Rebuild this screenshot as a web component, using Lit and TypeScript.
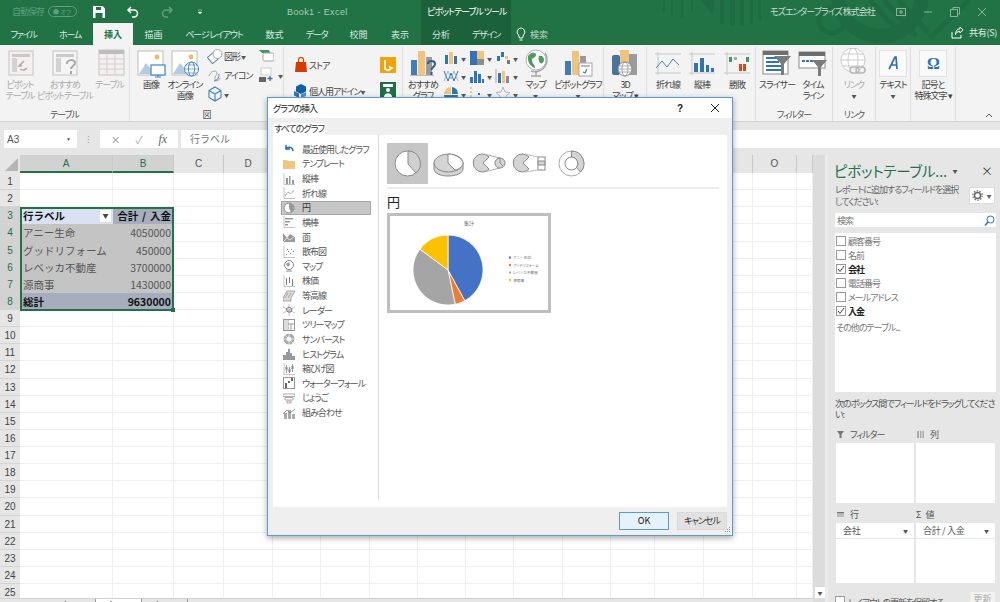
import { LitElement, html, svg, css } from "lit";
import { customElement } from "lit/decorators.js";

const BLUE = "#4472c4";
const ORANGE = "#ed7d31";
const GRAY = "#a5a5a5";
const YELLOW = "#ffc000";

// pivot data, the pie slices are worked out from these
const pivot = [
  { name: "アニー生命", value: 4050000, color: BLUE },
  { name: "グッドリフォーム", value: 450000, color: ORANGE },
  { name: "レベッカ不動産", value: 3700000, color: GRAY },
  { name: "源商事", value: 1430000, color: YELLOW },
];
const total = pivot.reduce((a, p) => a + p.value, 0);

function pieSlices(cx: number, cy: number, r: number) {
  let start = 0;
  return pivot.map((p) => {
    const end = start + (p.value / total) * Math.PI * 2;
    const x1 = cx + r * Math.sin(start);
    const y1 = cy - r * Math.cos(start);
    const x2 = cx + r * Math.sin(end);
    const y2 = cy - r * Math.cos(end);
    const large = end - start > Math.PI ? 1 : 0;
    start = end;
    return { d: `M${cx} ${cy}L${x1} ${y1}A${r} ${r} 0 ${large} 1 ${x2} ${y2}Z`, color: p.color };
  });
}

const ic = (w: number, h: number, body: unknown) =>
  html`<svg width=${w} height=${h} viewBox="0 0 ${w} ${h}" fill="none">${body}</svg>`;

// ribbon icons, 30 x 30 box
const big = (body: unknown) => ic(30, 30, body);

const pictureBase = svg`
  <rect x="2" y="3" width="25" height="24" fill="#fff" stroke="#bdbdbd"/>
  <path d="M3 26L10 15l5 6 3-3 8 8z" fill="#b5cbe3"/>
  <circle cx="21" cy="9" r="2.4" fill="#f0b964"/>`;

const icons: Record<string, unknown> = {
  pivot: big(svg`<rect x="4" y="3" width="24" height="24" fill="#f5eff0" stroke="#c4c4c4"/><rect x="7" y="6" width="18" height="3" fill="#c9c9c9"/><rect x="7" y="10" width="5" height="14" fill="#d2d2d2"/><path d="M19 13l-5 5 3 0M22 20a5 5 0 0 1-7 1" stroke="#aaa" stroke-width="1.5"/>`),
  recpivot: big(svg`<rect x="3" y="3" width="24" height="24" fill="#f5f5f5" stroke="#c4c4c4"/><rect x="6" y="6" width="18" height="3" fill="#c9c9c9"/><rect x="6" y="10" width="5" height="14" fill="#d2d2d2"/><path d="M17 16c0-5 8-5 8-1 0 3-4 3-4 6M21 23v3" stroke="#a9a9a9" stroke-width="2"/>`),
  table: big(svg`<rect x="4" y="2" width="25" height="25" fill="#f6eff0" stroke="#c4c4c4"/><rect x="4" y="2" width="25" height="4" fill="#bdbdbd"/><path d="M12 6v21M20 6v21M4 11h25M4 16h25M4 21h25" stroke="#cfcfcf"/>`),
  picture: big(svg`${pictureBase}<rect x="15" y="17" width="14" height="10" fill="#fff" stroke="#3c86c4" stroke-width="1.2"/><path d="M19 29h6M22 27v2" stroke="#3c86c4"/>`),
  online: big(svg`${pictureBase}<circle cx="21.5" cy="21" r="7" fill="#fff" stroke="#4b8cc4"/><ellipse cx="21.5" cy="21" rx="3" ry="7" stroke="#4b8cc4"/><path d="M14.5 21h14M16 17h11M16 25h11" stroke="#4b8cc4" stroke-width=".7"/>`),
  rec: big(svg`<rect x="3" y="12" width="6" height="15" fill="#3f7cbc"/><rect x="10" y="3" width="7" height="24" fill="#f0c47c"/><rect x="18" y="9" width="6" height="18" fill="#9a9a9a"/><path d="M20 16c0-4 7-4 7 0 0 3-3.5 3-3.5 6M23.5 24v3" stroke="#2f5f96" stroke-width="2"/><path d="M2 27.5h24" stroke="#bbb"/>`),
  globe: big(svg`<circle cx="15" cy="12" r="10" fill="#fff" stroke="#b5b5b5"/><path d="M7 8c3-4 8-4 8-1s-5 2-4 6 3 3 3 7c-4-1-8-6-7-12zM18 8c3-1 5 1 5 4s-3 4-4 3-2-5-1-7z" fill="#4f9a5c"/><path d="M24 5a12 12 0 0 1-14 18M15 24v3M10 28h10" stroke="#a3a3a3" stroke-width="1.4"/>`),
  pivotchart: big(svg`<rect x="2" y="13" width="6" height="14" fill="#3f7cbc"/><rect x="9" y="3" width="7" height="24" fill="#f0c47c"/><rect x="17" y="8" width="6" height="10" fill="#9a9a9a"/><rect x="16" y="15" width="13" height="13" fill="#fff" stroke="#a5a5a5"/><path d="M18 18h9" stroke="#bbb" stroke-width="2"/><path d="M24 21l-2 4-2-1" stroke="#3f7cbc" stroke-width="1.3"/>`),
  map3d: big(svg`<rect x="2" y="7" width="8" height="20" rx="2" fill="#47739f"/><rect x="10" y="2" width="9" height="18" fill="#f0c47c"/><rect x="19" y="6" width="8" height="21" fill="#9c9c9c"/><circle cx="15" cy="21" r="7" fill="#fff" stroke="#8a8a8a"/><ellipse cx="15" cy="21" rx="3" ry="7" stroke="#8a8a8a" stroke-width=".7"/><path d="M8 21h14M9 18h12M9 24h12" stroke="#8a8a8a" stroke-width=".7"/>`),
  line: big(svg`<path d="M2 6h26M2 25h26M5 4v23" stroke="#c8c8c8"/><path d="M3 20l6-7 5 6 6-8 6 6" stroke="#4a86c5"/>`),
  column: big(svg`<path d="M2 6h26M2 25h26M5 4v23" stroke="#c8c8c8"/><path d="M7 15h4v9H7zM13 10h4v14h-4zM19 17h3v7h-3zM24 20h3v4h-3z" fill="#2f75b5"/>`),
  winloss: big(svg`<path d="M2 6h26M2 25h26M5 4v23" stroke="#c8c8c8"/><path d="M7 9h3v5H7zM24 9h3v5h-3z" fill="#3c9a5f"/><path d="M12 9h3v3h-3z" fill="#aaa"/><path d="M17 16h3v7h-3zM21 16h3v7h-3z" fill="#d8481f"/>`),
  slicer: big(svg`<rect x="1" y="3" width="25" height="23" fill="#fff" stroke="#8c8c8c"/><rect x="1" y="3" width="25" height="4" fill="#6e6e6e"/><path d="M4 10h13M4 14h13M4 18h15M4 22h18" stroke="#2f75b5" stroke-width="2"/><path d="M12 8h17l-7 8v11h-3V16z" fill="#7b7b7b"/>`),
  timeline: big(svg`<rect x="1" y="4" width="26" height="16" fill="#fff" stroke="#8c8c8c"/><rect x="1" y="4" width="26" height="4" fill="#6e6e6e"/><path d="M4 13h14" stroke="#2f75b5" stroke-width="2" stroke-dasharray="3 1"/><path d="M14 12h15l-6 7v9h-3v-9z" fill="#7b7b7b"/>`),
  link: big(svg`<circle cx="14" cy="12" r="12" fill="#fff" stroke="#ccc"/><ellipse cx="14" cy="12" rx="5" ry="12" stroke="#ccc"/><path d="M2 12h24M4 6h20M4 18h20" stroke="#ccc"/><rect x="11" y="19" width="9" height="6" rx="3" fill="#f3f3f3" stroke="#b5b5b5" stroke-width="1.5"/><rect x="17" y="19" width="9" height="6" rx="3" stroke="#b5b5b5" stroke-width="1.5"/>`),
  text: ic(28, 30, svg`<rect x=".5" y="2.5" width="27" height="26" fill="#fafafa" stroke="#e2e2e2"/><path d="M10 21l6-12h1l1 12M12 17h6" stroke="#2f6fb5" stroke-width="1.7"/>`),
  omega: ic(28, 30, svg`<rect x=".5" y="2.5" width="27" height="26" fill="#fafafa" stroke="#e2e2e2"/><text x="14" y="21" text-anchor="middle" font-size="16" font-family="Liberation Serif" fill="#2f6fb5" font-weight="700">Ω</text>`),
};

const small: Record<string, unknown> = {
  shape: ic(16, 16, svg`<rect x="2" y="6" width="8" height="8" transform="rotate(-40 6 10)" fill="#fff" stroke="#3d80bd"/><circle cx="10.5" cy="6" r="4.5" fill="#fff" stroke="#a5a5a5"/>`),
  icon: ic(16, 16, svg`<path d="M2 9c2-6 8-6 8-3s-3 3-2 6 4 2 5-1" stroke="#a5a5a5"/><path d="M7 14c3 0 5-3 5-7" stroke="#3d80bd"/>`),
  cube: ic(16, 16, svg`<path d="M8 1l6 3.5v7L8 15l-6-3.500v-7zM2 4.500L8 8l6-3.500M8 8v7" stroke="#3d80bd" stroke-width="1.1"/>`),
  store: ic(16, 16, svg`<path d="M3 5h10l1 10H2z" fill="#d83b01"/><path d="M5.5 6V3a2.5 2.5 0 0 1 5 0v3" stroke="#d83b01" stroke-width="1.2"/>`),
  addin: ic(16, 16, svg`<path d="M8 1l5 2.5v5L8 11 3 8.5v-5z" fill="#0f5ea8"/><path d="M1 8l5 2.5V15l-5-2.5z" fill="#2f75b5"/><path d="M8 11.5l5-2.5v4l-5 2.5z" fill="#4a90d0"/>`),
  bing: ic(16, 16, svg`<rect width="16" height="16" fill="#f0a30a"/><path d="M5 3v9l3 1.500 4-2.500-3-1.500" stroke="#fff" stroke-width="1.6"/>`),
  people: ic(16, 16, svg`<rect width="16" height="16" fill="#1e7145"/><rect x="3" y="2" width="10" height="3" fill="#fff"/><circle cx="8" cy="8" r="2" fill="#fff"/><path d="M4 15c0-5 8-5 8 0z" fill="#fff"/>`),
  tag: ic(16, 16, svg`<path d="M1 2h10l1 3H4z" fill="#3c9a5f"/><rect x="5" y="5" width="11" height="8" rx="1.5" fill="#fff" stroke="#a5a5a5"/>`),
  camera: ic(16, 16, svg`<rect x="3" y="1" width="10" height="7" fill="#fff" stroke="#d0d0d0"/><rect x="1" y="10" width="7" height="5" fill="#666"/><path d="M12 9v5M9.5 11.5h5" stroke="#2f75b5" stroke-width="1.3"/>`),
  c1: ic(16, 16, svg`<path d="M2 5h3v9H2zM11 6h3v8h-3z" fill="#2f75b5"/><path d="M6 2h4v12H6z" fill="#f0c47c"/>`),
  c2: ic(16, 16, svg`<rect x="1" y="1" width="7" height="14" fill="#2f75b5"/><rect x="8" y="1" width="7" height="8" fill="#f0c47c"/><rect x="8" y="9" width="7" height="6" fill="#8c8c8c"/>`),
  c3: ic(16, 16, svg`<path d="M2 6h3v5H2zM6 2h3v5H6z" fill="#2f75b5"/><path d="M10 6h3v3h-3z" fill="#f0c47c"/><path d="M12 10h3v4h-3z" fill="#777"/>`),
  c4: ic(16, 16, svg`<path d="M1 3l4 10 3-8 3 8 4-10" stroke="#2f75b5"/><path d="M1 13l4-10 3 8 3-8 4 10" stroke="#9db8d6"/>`),
  c5: ic(16, 16, svg`<path d="M1 9h3v6H1zM5 3h3v12H5zM9 6h3v9H9zM13 11h2v4h-2z" fill="#2f75b5"/>`),
  c6: ic(16, 16, svg`<path d="M1 1v14" stroke="#aaa"/><path d="M3 5h3v10H3z" fill="#2f75b5"/><path d="M7 3h3v12H7z" fill="#f0c47c"/><path d="M11 8h3v7h-3z" fill="#8c8c8c"/>`),
  c7: ic(16, 16, svg`<path d="M8 8V1a7 7 0 0 0-7 7z" fill="#f0c47c"/><path d="M9 1a7 7 0 0 1 6 7H9z" fill="#2f75b5"/><path d="M1 9h14a7 7 0 0 1-14 0z" fill="#2f75b5"/>`),
  c8: ic(16, 16, svg`<path d="M2 1v14" stroke="#f0b964" stroke-width="1.5" stroke-dasharray="2 2"/><path d="M5 11h2v2H5zM9 7h2v2H9zM13 11h2v2h-2z" fill="#2f75b5"/>`),
  c9: ic(16, 16, svg`<path d="M8 1l2 5 5 .5-4 3.500 1 5-4-2.500L4 15l1-5-4-3.500L6 6z" stroke="#b5b5b5"/>`),
};

// gallery list icons, all greys
const g = (body: unknown) => ic(12, 12, body);
const axes = svg`<path d="M1 0v11.500h11" stroke="#aaa" stroke-width=".7"/>`;
const chartList: { label: string; icon: unknown }[] = [
  { label: "最近使用したグラフ", icon: g(svg`<path d="M3 2v4h4M3 6c2-3 7-2 7 2" stroke="#1f6fb5" stroke-width="1.5"/>`) },
  { label: "テンプレート", icon: g(svg`<path d="M0 2h4l1 1h7v8H0z" fill="#f0c67e"/>`) },
  { label: "縦棒", icon: g(svg`${axes}<path d="M3 5h2v6H3zM6 3h1.5v8H6zM9 7h2v4H9z" fill="#999"/>`) },
  { label: "折れ線", icon: g(svg`${axes}<path d="M2 9l3-4 3 2 3-4" stroke="#888" stroke-dasharray="1 .6"/>`) },
  { label: "円", icon: g(svg`<circle cx="6" cy="6" r="5" fill="#fff" stroke="#888"/><path d="M6 1a5 5 0 0 1 2 9.500L6 6z" fill="#999"/>`) },
  { label: "横棒", icon: g(svg`${axes}<path d="M2 2h8v1.500H2zM2 5h5v1.500H2zM2 8h3v1.500H2z" fill="#999"/>`) },
  { label: "面", icon: g(svg`<path d="M0 11V2l4 5 3-4 5 3v5z" fill="#999"/><path d="M0 11l4-4 3 2 5-4" stroke="#fff" stroke-width=".7"/>`) },
  { label: "散布図", icon: g(svg`${axes}<path d="M3 8h1v1H3zM5 5h1v1H5zM7 7h1v1H7zM8 3h1v1H8zM10 5h1v1h-1zM4 3h1v1H4z" fill="#777"/>`) },
  { label: "マップ", icon: g(svg`<circle cx="6" cy="5" r="4.5" stroke="#888"/><path d="M3 4l3-2 1 3-2 2z" fill="#999"/><path d="M3 11h6" stroke="#888"/>`) },
  { label: "株価", icon: g(svg`${axes}<path d="M3.5 3v7M6.5 2v6M9.5 4v7" stroke="#888"/><path d="M3 5h1v3H3zM6 3h1v3H6zM9 6h1v3H9z" fill="#777"/>`) },
  { label: "等高線", icon: g(svg`<path d="M0 8l4-7h8L8 8v3H0z" fill="#ddd" stroke="#888" stroke-width=".7"/><path d="M2 8l3-5M5 8l3-5" stroke="#888" stroke-width=".7"/>`) },
  { label: "レーダー", icon: g(svg`<path d="M6 0v12M0 3l12 6M12 3L0 9" stroke="#aaa" stroke-width=".7"/><path d="M6 3l3 2-1 3-3 0-2-3z" stroke="#777"/>`) },
  { label: "ツリーマップ", icon: g(svg`<rect x=".5" y=".5" width="11" height="11" stroke="#999"/><path d="M5 1v10M5 5h6M8 5v6" stroke="#999"/><rect x="1" y="1" width="4" height="10" fill="#ddd"/>`) },
  { label: "サンバースト", icon: g(svg`<circle cx="6" cy="6" r="5.5" fill="#aaa"/><circle cx="6" cy="6" r="2.5" fill="#eee"/><path d="M6 0v12M0 6h12M2 2l8 8" stroke="#fff" stroke-width=".6"/>`) },
  { label: "ヒストグラム", icon: g(svg`<path d="M0 12V7h3V4h2V1h2v4h2v3h3v4z" fill="#999"/>`) },
  { label: "箱ひげ図", icon: g(svg`${axes}<path d="M3.5 2v8M6.5 4v6M9.5 1v8" stroke="#999"/><path d="M2.5 4h2v3h-2zM5.5 6h2v3h-2zM8.5 3h2v3h-2z" fill="#888"/>`) },
  { label: "ウォーターフォール", icon: g(svg`<rect x=".5" y=".5" width="11" height="11" stroke="#999"/><path d="M2 6h2v5H2zM5 4h2v2H5zM8 1h2v3H8z" fill="#666"/>`) },
  { label: "じょうご", icon: g(svg`<path d="M0 2h12v2.500H0zM2 5.500h8v2.500H2zM4 9h4v2H4z" stroke="#999" stroke-width=".8"/>`) },
  { label: "組み合わせ", icon: g(svg`<path d="M1 12V6h3v6zM5 12V3h3v9zM9 12V7h3v5z" fill="#aaa"/><path d="M0 7l4-4 3 3 5-4" stroke="#777" stroke-width=".7"/>`) },
];

const thumbs = [
  svg`<circle cx="20.5" cy="20.5" r="12.5" fill="#fff" stroke="#8a8a8a"/><path d="M21 8a12.5 12.5 0 0 1 8 22L21 21z" fill="#cfcfcf" stroke="#8a8a8a"/>`,
  svg`<path d="M6 20v6c0 4 6 7 14 7s15-3 15-7v-6" fill="#d4d4d4" stroke="#8a8a8a"/><ellipse cx="20.5" cy="20" rx="14.5" ry="9" fill="#d4d4d4" stroke="#8a8a8a"/><path d="M20 11v9l7 7c5-1 8-4 8-7s-6-9-15-9z" fill="#fff" stroke="#8a8a8a"/>`,
  svg`<path d="M14 20L20 14A9 9 0 1 0 20 26Z" fill="#d4d4d4" stroke="#8a8a8a"/><path d="M15 11l16 4M15 29l16-4" stroke="#aaa"/><circle cx="31" cy="20" r="5" fill="#d4d4d4" stroke="#8a8a8a"/><path d="M31 15v5l3 3" stroke="#8a8a8a"/>`,
  svg`<path d="M14 20L20 14A9 9 0 1 0 20 26Z" transform="translate(-1 0)" fill="#d4d4d4" stroke="#8a8a8a"/><rect x="28" y="14" width="7" height="13" fill="#fff" stroke="#8a8a8a"/><path d="M28 18h7v4h-7z" fill="#d4d4d4" stroke="#8a8a8a"/><path d="M15 11l13 3M15 29l13-2" stroke="#bbb"/>`,
  svg`<circle cx="20.5" cy="20.5" r="12.5" fill="#fff" stroke="#aaa"/><circle cx="20.5" cy="20.5" r="6.5" fill="#fff" stroke="#8a8a8a"/><path d="M20.5 8a12.5 12.5 0 0 1 9 21l-4-4.500a6.5 6.5 0 0 0-5-10.500z" fill="#d4d4d4" stroke="#8a8a8a"/>`,
];

@customElement("app-root")
export class AppRoot extends LitElement {
  static styles = css`
    :host {
      display: block;
      width: 1000px;
      height: 602px;
      overflow: hidden;
      position: relative;
      font-family: "Noto Sans CJK JP", "Liberation Sans", sans-serif;
      font-size: 9px;
      letter-spacing: -1px;
      color: #444;
      font-feature-settings: "palt";
      background: #e6e6e6;
    }
    svg { display: block; flex: none; }

    /* title bar */
    .top { background: #217346; position: relative; height: 45px; color: #fff; }
    .pattern { position: absolute; left: 640px; top: 0; }
    .titlebar { position: relative; height: 23px; display: flex; align-items: center; }
    .autosave { margin-left: 12px; width: 33px; color: #5f9f7d; white-space: nowrap; }
    .toggle { margin-left: 3px; border: 1px solid #5f9f7d; border-radius: 6px; color: #5f9f7d; font-size: 6px; line-height: 9px; padding-left: 4px; width: 23px; height: 9px; white-space: nowrap; letter-spacing: 0; }
    .qat { display: flex; align-items: center; margin-left: 15px; gap: 20px; }
    .doc { position: absolute; left: 287px; color: #a9cbb8; font-size: 9px; letter-spacing: 0.4px; font-family: "Liberation Sans", sans-serif; }
    .tool { position: absolute; left: 421px; width: 90px; top: 0; height: 23px; line-height: 23px; padding-left: 6px; box-sizing: border-box; background: #1b6139; white-space: nowrap; overflow: hidden; }
    .account { position: absolute; left: 770px; color: #c4dccf; }
    .winbtns { position: absolute; left: 895px; display: flex; gap: 15px; align-items: center; }
    .tabs { position: relative; height: 22px; display: grid; grid-template-columns: 47px 46px 40px 41px 80px 41px 43px 41px 42px 40px 50px 1fr; align-items: stretch; }
    .tab { display: flex; align-items: center; justify-content: center; color: #dbe9e1; white-space: nowrap; letter-spacing: -1.2px; }
    .tab.kanji { letter-spacing: 0; }
    .tab.active { background: #f3f3f3; color: #217346; font-weight: 700; }
    .tab.ctx { background: #1b6139; }
    .tellme { display: flex; align-items: center; gap: 4px; padding-left: 5px; color: #bcd6c7; letter-spacing: 0; }
    .share { position: absolute; right: 3px; top: 3px; display: flex; align-items: center; gap: 5px; color: #e4efe9; letter-spacing: -.3px; }

    /* ribbon */
    .ribbon { height: 76px; background: #f3f3f3; border-bottom: 1px solid #d4d4d4; display: flex; overflow: hidden; }
    .group { display: flex; flex-direction: column; border-right: 1px solid #dedede; box-sizing: border-box; margin: 2px 0 0; }
    .group:last-child { border-right: 0; flex: 1; position: relative; }
    .g-content { flex: 1; display: flex; min-height: 0; }
    .g-label { height: 13px; line-height: 13px; text-align: center; color: #555; flex: none; }
    .big { display: flex; flex-direction: column; align-items: center; line-height: 11px; text-align: center; white-space: nowrap; padding-top: 1px; color: #444; flex: none; }
    .big .lines { margin-top: 1px; }
    .dim .big { color: #aaa; }
    .col { display: flex; flex-direction: column; gap: 3px; padding-top: 1px; flex: none; }
    .si { display: flex; align-items: center; gap: 4px; height: 16px; white-space: nowrap; }
    .caret { color: #555; font-size: 5px; letter-spacing: 0; }
    .w130 { width: 130px; } .w154 { width: 154px; } .w119 { width: 119px; } .w201 { width: 201px; }
    .w43 { width: 43px; } .w109 { width: 109px; } .w77 { width: 77px; } .w35 { width: 35px; } .w45 { width: 45px; }
    .pl4 { padding-left: 4px; } .pl3 { padding-left: 3px; }
    .gw54 { width: 54px; padding-left: 5px; box-sizing: border-box; }
    .gw54 .si { gap: 1px; }
    .gw2 { padding-left: 2px; }
    .addin-a { width: 96px; padding-left: 9px; padding-top: 10px; gap: 10px; box-sizing: border-box; }
    .addin-a .si { gap: 0; }
    .addin-b { padding-top: 10px; gap: 9px; }
    .minis { display: grid; grid-template-columns: 26px 26px 26px; grid-auto-rows: 18px; padding-top: 2px; flex: none; }
    .mini { display: flex; align-items: center; gap: 2px; }
    .spacer { width: 2px; flex: none; }
    .chev { position: absolute; right: 5px; bottom: 2px; }

    /* formula bar */
    .formula { height: 33px; display: flex; align-items: center; box-sizing: border-box; padding-top: 1px; letter-spacing: 0; }
    .namebox { margin-left: 4px; width: 73px; height: 18px; background: #fff; display: flex; align-items: center; justify-content: space-between; padding: 0 6px 0 3px; box-sizing: border-box; font-family: "Liberation Sans", sans-serif; font-size: 10px; color: #555; }
    .namebox span:last-child { font-size: 5px; }
    .dots { width: 23px; text-align: center; color: #999; font-size: 9px; }
    .fxbox { width: 78px; height: 18px; background: #fff; display: flex; align-items: center; justify-content: space-around; padding: 0 3px; box-sizing: border-box; color: #aaa; font-size: 11px; }
    .fx { font-family: "Liberation Serif", serif; font-style: italic; color: #666; font-size: 12px; }
    .input { margin-left: 3px; flex: 1; height: 18px; line-height: 18px; background: #fff; padding-left: 9px; color: #777; font-size: 10px; font-feature-settings: normal; }

    /* sheet */
    .main { display: flex; height: 447px; }
    .left { width: 813px; display: flex; flex-direction: column; }
    .sheet { height: 443px; overflow: hidden; background: #fff; position: relative; display: grid; grid-template-columns: 20px 93px 61px 50px 49px repeat(7, 48.29px) 44px 49px 49px 44px 16px; grid-template-rows: 18px repeat(25, 17.14px); font-size: 10.5px; font-feature-settings: normal; letter-spacing: 0; color: #555; }
    .cell { border-right: 1.5px solid #efefef; border-bottom: 1.5px solid #efefef; box-sizing: border-box; line-height: 17px; padding: 0 2px 0 3px; white-space: nowrap; overflow: hidden; position: relative; }
    .ch { background: #e6e6e6; border-right: 1px solid #c8c8c8; border-bottom: 0; text-align: center; line-height: 17px; font-size: 10px; font-family: "Liberation Sans", sans-serif; color: #555; padding: 0; }
    .ch.sel { background: #d2d2d2; color: #217346; border-bottom: 2px solid #217346; }
    .corner { background: #e6e6e6; border: 0; padding: 0; }
    .rh { background: #e6e6e6; border-right: 0; border-bottom: 1px solid #d4d4d4; text-align: center; padding: 0; font-family: "Liberation Sans", sans-serif; font-size: 10px; color: #444; }
    .rh.sel { background: #d2d2d2; color: #217346; }
    .num { text-align: right; }
    .a3 { background: #d9e1f2; font-weight: 700; color: #111; border-color: #d9e1f2; }
    .b3 { background: #a6aebd; font-weight: 700; color: #111; border-color: #a6aebd; text-align: right; word-spacing: 1.5px; }
    .body { background: #c4c4c4; border-color: #c4c4c4; }
    .sum { background: #a6aebd; border-color: #a6aebd; font-weight: 700; color: #111; }
    .fbtn { position: absolute; right: 1px; top: 3px; width: 11px; height: 12px; background: #fff; color: #444; font-size: 6px; line-height: 12px; text-align: center; font-weight: 400; }
    .selbox { position: absolute; left: 20px; top: 52px; width: 154px; height: 104px; border: 2px solid #217346; box-sizing: border-box; pointer-events: none; }
    .handle { position: absolute; right: -3px; bottom: -3px; width: 4px; height: 4px; background: #217346; }
    .sheetbar { height: 4px; background: #e6e6e6; display: flex; padding-left: 50px; overflow: hidden; border-top: 1px solid #d0d0d0; box-sizing: border-box; letter-spacing: 0; }
    .stab { width: 45px; height: 14px; border-right: 1px solid #999; text-align: center; font-family: "Liberation Sans", sans-serif; font-size: 9px; line-height: 12px; }
    .stab.on { background: #fff; color: #217346; font-weight: 700; }
    .scroll { width: 12px; background: #dcdcdc; display: flex; flex-direction: column; justify-content: flex-end; align-items: flex-end; padding-bottom: 4px; box-sizing: border-box; }
    .sdown { width: 10px; height: 11px; background: #fff; color: #555; font-size: 5px; line-height: 11px; text-align: center; letter-spacing: 0; }

    /* field list pane */
    .pane { width: 175px; box-sizing: border-box; padding: 0 4px 0 7px; display: flex; flex-direction: column; border-left: 3px solid #ececec; position: relative; }
    .p-head { display: flex; align-items: center; height: 24px; margin-top: 3px; flex: none; }
    .p-title { color: #217346; font-size: 14.5px; letter-spacing: -.2px; width: 118px; white-space: nowrap; overflow: hidden; margin-left: -1px; flex: none; }
    .p-arrow { font-size: 5px; color: #555; width: 8px; text-align: center; margin-left: -1px; letter-spacing: 0; flex: none; }
    .p-close { color: #444; font-size: 12px; margin-left: 22px; }
    .p-desc { display: flex; height: 27px; margin-top: 2px; line-height: 12px; color: #666; white-space: nowrap; flex: none; }
    .gear { margin-left: auto; margin-right: 1px; margin-top: 3px; width: 26px; height: 17px; background: #fff; border: 1px solid #ddd; box-sizing: border-box; display: flex; align-items: center; justify-content: center; gap: 3px; font-size: 5px; letter-spacing: 0; }
    .search { height: 14px; margin-top: 2px; background: #fff; display: flex; align-items: center; justify-content: space-between; padding: 0 1px 0 2px; color: #777; flex: none; }
    .fields { background: #fff; height: 159px; margin-top: 6px; padding: 1px 0 0 1px; box-sizing: border-box; flex: none; }
    .field { display: flex; align-items: center; gap: 2px; height: 14px; color: #777; }
    .field.on { color: #222; font-weight: 700; }
    .check { width: 10px; height: 10px; box-sizing: border-box; background: #fff; border: 1px solid #999; flex: none; }
    .more { margin-top: 3px; color: #777; }
    .p-hint { margin-top: 6px; line-height: 11px; color: #555; height: 27px; flex: none; }
    .areas { display: grid; grid-template-columns: 78px 79px; column-gap: 2px; margin-left: 1px; flex: none; }
    .a-label { display: flex; align-items: center; gap: 5px; height: 18px; color: #555; }
    .a-label.lower { margin-top: 2px; }
    .a-box { background: #fff; height: 60px; }
    .a-item { display: flex; justify-content: space-between; align-items: center; height: 15px; padding: 0 6px 0 7px; color: #555; border-bottom: 1px solid #e8e8e8; background: #fff; letter-spacing: -.3px; }
    .a-item span:last-child { font-size: 5px; letter-spacing: 0; }
    .p-foot { display: flex; align-items: flex-start; gap: 3px; margin-top: 13px; color: #555; height: 14px; white-space: nowrap; flex: none; }
    .update { margin-left: auto; width: 25px; height: 16px; margin-top: -4px; margin-right: 1px; background: #f2f2f2; color: #aaa; text-align: center; letter-spacing: 0; }

    /* dialog */
    .dialog { position: absolute; left: 267px; top: 97px; width: 466px; height: 439px; box-sizing: border-box; border: 1.5px solid #5b9bd5; background: #efefef; box-shadow: 0 2px 6px rgba(0,0,0,.35); display: flex; flex-direction: column; z-index: 5; }
    .d-title { height: 20px; flex: none; background: #fff; display: flex; align-items: center; padding: 0 5px; color: #222; }
    .d-help { margin-left: auto; font-size: 10px; font-weight: 700; font-family: "Liberation Sans", sans-serif; letter-spacing: 0; }
    .d-close { margin: 0 7px 0 27px; }
    .d-tabs { height: 17px; flex: none; padding: 5px 0 0 5px; box-sizing: border-box; }
    .d-tab { width: 52px; height: 12px; background: #fff; line-height: 12px; text-align: center; color: #333; white-space: nowrap; }
    .d-body { flex: 1; margin: 0 5px; background: #fff; display: flex; min-height: 0; }
    .list { width: 106px; padding-top: 7px; box-sizing: border-box; flex: none; border-right: 1px solid #dcdcdc; margin-bottom: 8px; }
    .li { display: flex; align-items: center; height: 14.63px; margin-left: 8px; width: 90px; box-sizing: border-box; padding-left: 2px; gap: 7px; color: #555; white-space: nowrap; }
    .li.on { background: #c6c6c6; border: 1px solid #a8a8a8; padding-left: 1px; color: #333; }
    .gallery { flex: 1; padding: 8px 8px 0 8px; }
    .thumbs { display: flex; }
    .thumb { width: 41px; height: 41px; }
    .thumb.on { background: #c6c6c6; }
    .rule { height: 2px; margin-top: 3px; background: #eee; }
    .g-name { font-size: 13px; line-height: 17px; margin-top: 4px; color: #222; height: 18px; }
    .preview { margin-top: 2px; width: 164px; height: 100px; letter-spacing: 0; }
    .d-foot { height: 28px; flex: none; display: flex; justify-content: flex-end; align-items: flex-start; gap: 8px; padding: 5px 5px 0 0; box-sizing: border-box; position: relative; }
    .btn { width: 50px; height: 18px; background: #e1e1e1; border: 1px solid #dadada; box-sizing: border-box; text-align: center; line-height: 16px; color: #333; }
    .btn.ok { background: #e5f1fb; border-color: #5b9bd5; color: #111; letter-spacing: 0; }
    .grip { position: absolute; right: 1px; bottom: 1px; }
  `;

  // column letters for the header row
  private get columns() {
    return "ABCDEFGHIJKLMNOP".split("");
  }

  private pivotRow(r: number, c: number) {
    if (r < 3 || r > 8 || c > 1) return null;
    if (r === 3) {
      return c === 0
        ? html`<div class="cell a3">行ラベル<span class="fbtn">▼</span></div>`
        : html`<div class="cell b3">合計 / 入金</div>`;
    }
    if (r === 8) {
      return c === 0
        ? html`<div class="cell sum">総計</div>`
        : html`<div class="cell sum num">${total}</div>`;
    }
    const p = pivot[r - 4];
    return c === 0
      ? html`<div class="cell body">${p.name}</div>`
      : html`<div class="cell body num">${p.value}</div>`;
  }

  private renderSheet() {
    const cols = this.columns;
    const rows = Array.from({ length: 25 }, (_, i) => i + 1);
    return html`<div class="sheet">
      <div class="cell corner">${ic(20, 17, svg`<path d="M18 3v13H5z" fill="#b5b5b5"/>`)}</div>
      ${cols.map((c, i) => html`<div class="cell ch ${i < 2 ? "sel" : ""}">${c === "P" ? "" : c}</div>`)}
      ${rows.map(
        (r) => html`<div class="cell rh ${r >= 3 && r <= 8 ? "sel" : ""}">${r}</div>
          ${cols.map((_, c) => this.pivotRow(r, c) ?? html`<div class="cell"></div>`)}`,
      )}
      <div class="selbox"><div class="handle"></div></div>
    </div>`;
  }

  private renderRibbon() {
    const bigBtn = (icon: unknown, lines: string[], w: number, caret = false) => html`
      <div class="big" style="width:${w}px">
        ${icon}
        <div class="lines">${lines.map((l) => html`<div>${l}</div>`)}${caret ? html`<div class="caret">▼</div>` : ""}</div>
      </div>`;
    const minis = ["c1", "c2", "c3", "c4", "c5", "c6", "c7", "c8", "c9"];
    return html`<div class="ribbon">
      <div class="group w130 dim">
        <div class="g-content">
          ${bigBtn(icons.pivot, ["ピボット", "テーブル"], 40)}
          ${bigBtn(icons.recpivot, ["おすすめ", "ピボットテーブル"], 50)}
          ${bigBtn(icons.table, ["テーブル"], 39)}
        </div>
        <div class="g-label">テーブル</div>
      </div>
      <div class="group w154">
        <div class="g-content pl4">
          ${bigBtn(icons.picture, ["画像"], 34)}
          ${bigBtn(icons.online, ["オンライン", "画像"], 34)}
          <div class="col gw54">
            <div class="si">${small.shape}図形 <span class="caret">▼</span></div>
            <div class="si">${small.icon}アイコン</div>
            <div class="si">${small.cube}<span class="caret">▼</span></div>
          </div>
          <div class="col gw2">
            <div class="si">${small.tag}</div>
            <div class="si">${small.camera}<span class="caret">▼</span></div>
          </div>
        </div>
        <div class="g-label">図</div>
      </div>
      <div class="group w119">
        <div class="g-content">
          <div class="col addin-a">
            <div class="si">${small.store}ストア</div>
            <div class="si">${small.addin}個人用アドイン <span class="caret">▼</span></div>
          </div>
          <div class="col addin-b">
            <div class="si">${small.bing}</div>
            <div class="si">${small.people}</div>
          </div>
        </div>
        <div class="g-label"></div>
      </div>
      <div class="group w201">
        <div class="g-content">
          ${bigBtn(icons.rec, ["おすすめ", "グラフ"], 40)}
          <div class="minis">
            ${minis.map((m) => html`<div class="mini">${small[m]}<span class="caret">▼</span></div>`)}
          </div>
          ${bigBtn(icons.globe, ["マップ"], 29, true)}
          <div class="spacer"></div>
          ${bigBtn(icons.pivotchart, ["ピボットグラフ"], 52, true)}
        </div>
        <div class="g-label"></div>
      </div>
      <div class="group w43">
        <div class="g-content">${bigBtn(icons.map3d, ["3D", "マップ ▾"], 42)}</div>
        <div class="g-label"></div>
      </div>
      <div class="group w109">
        <div class="g-content pl4">
          ${bigBtn(icons.line, ["折れ線"], 34)}
          ${bigBtn(icons.column, ["縦棒"], 34)}
          ${bigBtn(icons.winloss, ["勝敗"], 36)}
        </div>
        <div class="g-label"></div>
      </div>
      <div class="group w77">
        <div class="g-content pl3">
          ${bigBtn(icons.slicer, ["スライサー"], 36)}
          ${bigBtn(icons.timeline, ["タイム", "ライン"], 36)}
        </div>
        <div class="g-label">フィルター</div>
      </div>
      <div class="group w43 dim">
        <div class="g-content">${bigBtn(icons.link, ["リンク"], 42, true)}</div>
        <div class="g-label">リンク</div>
      </div>
      <div class="group w35">
        <div class="g-content">${bigBtn(icons.text, ["テキスト"], 34, true)}</div>
        <div class="g-label"></div>
      </div>
      <div class="group w45">
        <div class="g-content">${bigBtn(icons.omega, ["記号と", "特殊文字 ▾"], 44)}</div>
        <div class="g-label"></div>
      </div>
      <div class="group">
        <div class="chev">${ic(12, 8, svg`<path d="M3 6l3-3 3 3" stroke="#555"/>`)}</div>
      </div>
    </div>`;
  }

  private renderPane() {
    const fields = [
      ["顧客番号", false],
      ["名前", false],
      ["会社", true],
      ["電話番号", false],
      ["メールアドレス", false],
      ["入金", true],
    ] as const;
    const tick = ic(8, 8, svg`<path d="M1 4l2 2.500 4-5.500" stroke="#444"/>`);
    return html`<div class="pane">
      <div class="p-head">
        <div class="p-title">ピボットテーブル...</div>
        <div class="p-arrow">▼</div>
        <div class="p-close">×</div>
      </div>
      <div class="p-desc">
        <div>レポートに追加するフィールドを選択<br />してください:</div>
        <div class="gear">
          ${ic(11, 11, svg`<circle cx="5.5" cy="5.5" r="3" stroke="#666" stroke-width="1.5"/><circle cx="5.5" cy="5.5" r="4.7" stroke="#666" stroke-width="1.2" stroke-dasharray="1.5 1.45"/>`)}
          <span>▼</span>
        </div>
      </div>
      <div class="search">
        <span>検索</span>
        ${ic(11, 11, svg`<circle cx="6.5" cy="4.5" r="3.5" stroke="#2f75b5"/><path d="M4 7L1 10.500" stroke="#2f75b5" stroke-width="1.5"/>`)}
      </div>
      <div class="fields">
        ${fields.map(
          ([name, on]) => html`<div class="field ${on ? "on" : ""}">
            <div class="check">${on ? tick : ""}</div>
            ${name}
          </div>`,
        )}
        <div class="more">その他のテーブル...</div>
      </div>
      <div class="p-hint">次のボックス間でフィールドをドラッグしてください:</div>
      <div class="areas">
        <div class="a-label">${ic(9, 9, svg`<path d="M1 1h7L5.5 4.5V8h-2V4.5z" fill="#777"/>`)}フィルター</div>
        <div class="a-label">${ic(9, 9, svg`<path d="M1 1h2v7H1zM4 1h1.5v7H4zM6.5 1h1.500v7H6.5z" fill="#aaa"/>`)}列</div>
        <div class="a-box"></div>
        <div class="a-box"></div>
        <div class="a-label lower">${ic(9, 9, svg`<path d="M1 2h7v1.500H1z" fill="#777"/><path d="M1 4h7v3H1z" fill="#bbb"/>`)}行</div>
        <div class="a-label lower"><span>Σ</span>値</div>
        <div class="a-box"><div class="a-item"><span>会社</span><span>▼</span></div></div>
        <div class="a-box"><div class="a-item"><span>合計 / 入金</span><span>▼</span></div></div>
      </div>
      <div class="p-foot">
        <div class="check"></div>
        <span>レイアウトの更新を保留する</span>
        <div class="update">更新</div>
      </div>
    </div>`;
  }

  private renderDialog() {
    const slices = pieSlices(61, 57, 35);
    return html`<div class="dialog">
      <div class="d-title">
        <span>グラフの挿入</span>
        <span class="d-help">?</span>
        <span class="d-close">${ic(10, 10, svg`<path d="M1 1l8 8M9 1l-8 8" stroke="#222"/>`)}</span>
      </div>
      <div class="d-tabs"><div class="d-tab">すべてのグラフ</div></div>
      <div class="d-body">
        <div class="list">
          ${chartList.map(
            (c) => html`<div class="li ${c.label === "円" ? "on" : ""}">${c.icon}<span>${c.label}</span></div>`,
          )}
        </div>
        <div class="gallery">
          <div class="thumbs">
            ${thumbs.map((t, i) => html`<div class="thumb ${i === 0 ? "on" : ""}">${ic(41, 41, t)}</div>`)}
          </div>
          <div class="rule"></div>
          <div class="g-name">円</div>
          <div class="preview">
            <svg width="164" height="100" viewBox="0 0 164 100">
              <rect x="1.5" y="1.5" width="161" height="97" fill="#fff" stroke="#bfbfbf" stroke-width="3"/>
              <text x="82" y="12" text-anchor="middle" font-size="5" fill="#666" font-family="Noto Sans CJK JP">集計</text>
              ${slices.map((s) => svg`<path d=${s.d} fill=${s.color} stroke="#fff" stroke-width=".8"/>`)}
              ${pivot.map(
                (p, i) => svg`<rect x="122" y=${43.5 + i * 7.5} width="2" height="2" fill=${p.color}></rect>
                  <text x="126" y=${46 + i * 7.5} font-size="3.8" fill="#777" font-family="Noto Sans CJK JP">${p.name}</text>`,
              )}
            </svg>
          </div>
        </div>
      </div>
      <div class="d-foot">
        <div class="btn ok">OK</div>
        <div class="btn">キャンセル</div>
        <div class="grip">${ic(8, 8, svg`<path d="M6 1h1v1H6zM4 3h1v1H4zM6 3h1v1H6zM2 5h1v1H2zM4 5h1v1H4zM6 5h1v1H6z" fill="#999"/>`)}</div>
      </div>
    </div>`;
  }

  render() {
    const dark = "#1f6b41";
    return html`
      <div class="top">
        <svg class="pattern" width="360" height="45" viewBox="0 0 360 45" fill="none">
          <path d="M24 0v12M32 0v16M42 0v18M52 0v12" stroke=${dark} stroke-width="2"/>
          <path d="M60 0l14 16V0zM80 0h4v24h-4zM90 0h5v26h-5zM100 0h4v26h-4zM110 0h3v24h-3z" fill=${dark}/>
          <path d="M118 0h3v20h-3z" fill=${dark}/>
          <circle cx="192" cy="20" r="13" stroke=${dark} stroke-width="5"/>
          <circle cx="240" cy="-6" r="42" stroke=${dark} stroke-width="14"/>
          <path d="M230 0l34 38M244 0l32 36M258 0l30 32M330 0l-40 38" stroke=${dark} stroke-width="5"/>
        </svg>
        <div class="titlebar">
          <div class="autosave">自動保存</div>
          <div class="toggle">● オフ</div>
          <div class="qat">
            ${ic(14, 14, svg`<path d="M1 1h9.500L13 3.500V13H1z" fill="#fff"/><path d="M4 2h5v3H4z" fill="#217346"/><path d="M3.500 8h7v5h-7z" fill="#217346"/>`)}
            ${ic(14, 14, svg`<path d="M2 5h6a3.5 3.5 0 0 1 0 7H6M5 2L2 5l3 3" stroke="#fff" stroke-width="1.5"/>`)}
            ${ic(14, 14, svg`<path d="M12 5H6a3.5 3.5 0 0 0 0 7h2M9 2l3 3-3 3" stroke="#5f9f7d" stroke-width="1.5"/>`)}
            ${ic(12, 14, svg`<path d="M4 5h4M4 7h4l-2 2z" fill="#dfeee6" stroke="#dfeee6" stroke-width=".5"/>`)}
          </div>
          <div class="doc">Book1 - Excel</div>
          <div class="tool">ピボットテーブル ツール</div>
          <div class="account">モズエンタープライズ 株式会社</div>
          <div class="winbtns">
            ${ic(12, 12, svg`<rect x="1.5" y="2.5" width="9" height="7" stroke="#88b39b"/><path d="M4 6h4M6 4v4" stroke="#88b39b"/>`)}
            ${ic(12, 12, svg`<path d="M2 6h8" stroke="#88b39b"/>`)}
            ${ic(12, 12, svg`<rect x="1.5" y="3.5" width="7" height="7" stroke="#88b39b"/><path d="M4 3V1.5h6.5V8H9" stroke="#88b39b"/>`)}
            ${ic(12, 12, svg`<path d="M2 2l8 8M10 2l-8 8" stroke="#88b39b"/>`)}
          </div>
        </div>
        <div class="tabs">
          <div class="tab">ファイル</div>
          <div class="tab">ホーム</div>
          <div class="tab active kanji">挿入</div>
          <div class="tab kanji">描画</div>
          <div class="tab">ページ レイアウト</div>
          <div class="tab kanji">数式</div>
          <div class="tab">データ</div>
          <div class="tab kanji">校閲</div>
          <div class="tab kanji">表示</div>
          <div class="tab ctx kanji">分析</div>
          <div class="tab ctx">デザイン</div>
          <div class="tellme">
            ${ic(10, 14, svg`<path d="M5 1a4 4 0 0 1 2.5 7L6.5 11h-3L2.5 8A4 4 0 0 1 5 1zM3.5 13h3" stroke="#fff"/>`)}
            検索
          </div>
          <div class="share">
            ${ic(13, 13, svg`<path d="M9 1l3 3-3 3V5.500C6 5.500 5 7 4.500 8.500 4.500 5 6 3 9 2.800zM1 6v6h9V9" stroke="#fff"/>`)}
            共有(S)
          </div>
        </div>
      </div>
      ${this.renderRibbon()}
      <div class="formula">
        <div class="namebox"><span>A3</span><span>▼</span></div>
        <div class="dots">⋮</div>
        <div class="fxbox">
          <span>✕</span><span>✓</span><span class="fx">fx</span>
        </div>
        <div class="input">行ラベル</div>
      </div>
      <div class="main">
        <div class="left">
          ${this.renderSheet()}
          <div class="sheetbar">
            <div class="stab">Sheet2</div>
            <div class="stab on">Sheet1</div>
            <div class="stab">Sheet3</div>
          </div>
        </div>
        <div class="scroll"><div class="sdown">▼</div></div>
        ${this.renderPane()}
      </div>
      ${this.renderDialog()}
    `;
  }
}
